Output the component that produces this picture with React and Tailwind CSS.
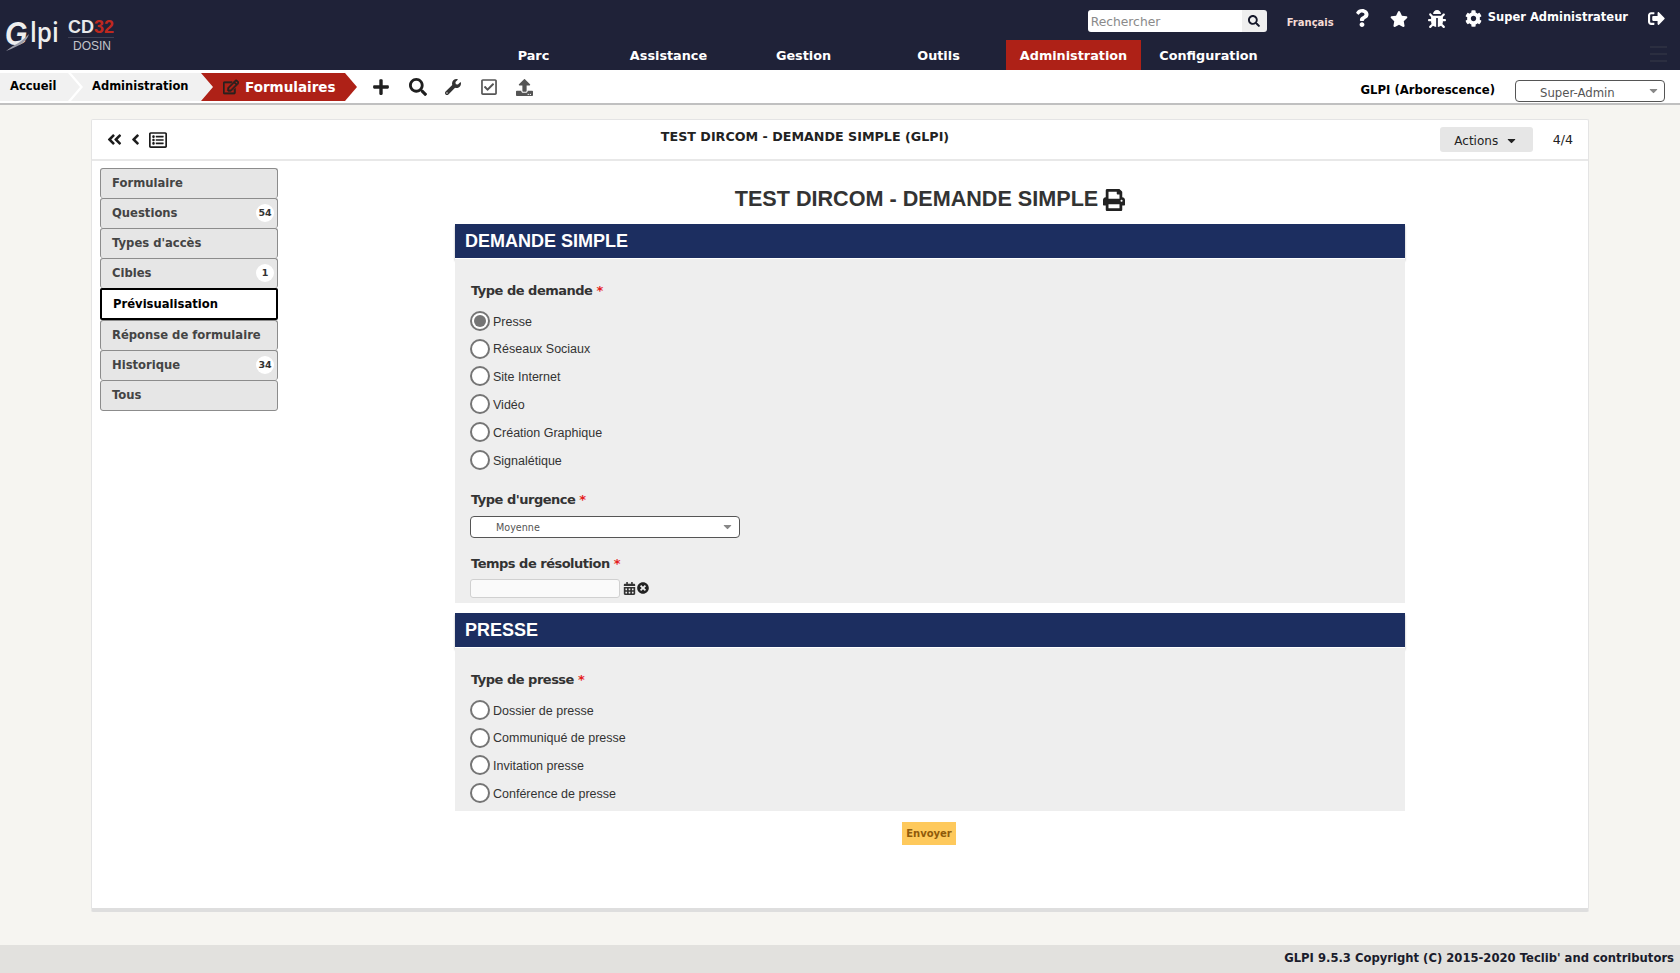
import {
  FaPlus, FaSearch, FaWrench, FaRegCheckSquare, FaUpload, FaQuestion, FaStar, FaBug, FaCog,
  FaSignOutAlt, FaPrint, FaAngleDoubleLeft, FaAngleLeft, FaRegListAlt, FaRegEdit, FaCalendarAlt,
  FaTimesCircle, FaCaretDown,
} from "react-icons/fa";

const verdana = "font-['DejaVu_Sans',sans-serif]";
const arial = "font-['Liberation_Sans',Arial,sans-serif]";

const navItems = ["Parc", "Assistance", "Gestion", "Outils", "Administration", "Configuration"];

const tabs = [
  { label: "Formulaire" },
  { label: "Questions", count: 54 },
  { label: "Types d'accès" },
  { label: "Cibles", count: 1 },
  { label: "Prévisualisation", active: true },
  { label: "Réponse de formulaire" },
  { label: "Historique", count: 34 },
  { label: "Tous" },
];

function Logo() {
  return (
    <div className="flex items-start w-[120px] h-[50px] pl-[5px] pt-[14px]">
      <div className="relative flex items-start w-[56px] h-[40px] text-[#eeeeee]">
        <span className={`w-[25px] text-[34px] leading-[38px] font-bold italic scale-x-[0.85] origin-left ${arial}`}>G</span>
        <span className="text-[27px] leading-[36px] font-semibold scale-x-[0.9] origin-left font-['Open_Sans',sans-serif]">lpi</span>
        <svg className="absolute left-0 top-[18px]" width="28" height="20" viewBox="0 0 28 20">
          <path d="M1 19 C 8 13 16 11 24 2 C 22 10 14 14 1 19 Z" fill="#9a9ca8" />
        </svg>
      </div>
      <div className={`ml-[7px] mt-[5px] flex flex-col items-center w-[46px] ${arial}`}>
        <div className="text-[18px] leading-[17px] font-bold text-[#e8e8ea] border-b border-[#3d4054] pb-[1px] w-full whitespace-nowrap">
          CD<span className="text-[#c0281e]">32</span>
        </div>
        <div className="text-[12px] leading-[14px] mt-[1px] ml-[2px] text-[#c4c5cb]">DOSIN</div>
      </div>
    </div>
  );
}

function Header() {
  return (
    <header className="relative h-[70px] bg-[#1f2238] flex shrink-0">
      <Logo />
      <nav className={`absolute left-[466px] top-[40px] flex h-[30px] ${verdana}`}>
        {navItems.map((item) => (
          <a
            key={item}
            className={`w-[135px] h-[30px] pt-[1px] flex items-center justify-center text-[12.8px] font-bold text-white ${
              item === "Administration" ? "bg-[#ae2117]" : ""
            }`}
          >
            {item}
          </a>
        ))}
      </nav>
      <div className="ml-auto flex items-start text-white pr-[15px] pt-[10px]">
        <div className="flex h-[22px] w-[179px] rounded-[3px] overflow-hidden mr-[20px]">
          <div className={`flex-1 bg-white text-[#8a8a8a] text-[12.3px] leading-[24px] pl-[3px] ${verdana}`}>Rechercher</div>
          <div className="w-[25px] bg-[#efefef] flex items-center justify-center text-[#15182a]">
            <FaSearch size={12} />
          </div>
        </div>
        <span className={`text-[10px] font-bold text-[#f6dcd6] mt-[5px] mr-[19px] ${verdana}`}>Français</span>
        <FaQuestion size={18} className="mr-[19px] mt-[-1px]" />
        <FaStar size={18} className="mr-[20px]" />
        <FaBug size={18} className="mr-[19px]" />
        <FaCog size={17} className="mr-[6px]" />
        <span className={`text-[11.5px] font-bold leading-[14px] mr-[20px] ${verdana}`}>Super Administrateur</span>
        <FaSignOutAlt size={17} />
      </div>
      <div className="absolute left-[1650px] top-[46px] w-[17px] flex flex-col gap-[5px]">
        <div className="h-[2px] bg-[#2b2e40]" />
        <div className="h-[2px] bg-[#2b2e40]" />
        <div className="h-[2px] bg-[#2b2e40]" />
      </div>
    </header>
  );
}

function Breadcrumb() {
  return (
    <div className="h-[35px] bg-white border-b-2 border-[#c0c0c0] flex items-start shrink-0">
      <div className="flex items-center h-[28px] mt-[3px]">
        <div className={`h-[28px] w-[68px] bg-[#f1f1f1] flex items-center pl-[10px] text-[11.5px] font-bold text-black ${verdana}`}>
          Accueil
        </div>
        <div className="w-0 h-0 border-y-[14px] border-y-transparent border-l-[12px] border-l-[#f1f1f1]" />
        <div className={`h-[28px] w-[130px] ml-[-9px] bg-[#f1f1f1] flex items-center pl-[21px] text-[11.5px] font-bold text-black whitespace-nowrap ${verdana} [clip-path:polygon(0_0,100%_0,100%_100%,0_100%,12px_50%)]`}>
          Administration
        </div>
        <div className="w-0 h-0 border-y-[14px] border-y-transparent border-l-[12px] border-l-[#f1f1f1]" />
        <div className={`h-[28px] w-[144px] ml-[-12px] bg-[#ae2117] flex items-center pl-[22px] gap-[6px] text-[13.5px] font-bold text-white whitespace-nowrap ${verdana} [clip-path:polygon(0_0,100%_0,100%_100%,0_100%,12px_50%)]`}>
          <FaRegEdit size={16} stroke="currentColor" strokeWidth={24} className="text-[#2a2220] shrink-0" />
          Formulaires
        </div>
        <div className="w-0 h-0 border-y-[14px] border-y-transparent border-l-[12px] border-l-[#ae2117]" />
      </div>
      <div className="flex items-center h-[28px] mt-[3px] ml-[15px] text-[#1f1f1f]">
        <FaPlus size={18} className="mr-[19px]" />
        <FaSearch size={18} className="mr-[18px]" />
        <FaWrench size={16} className="mr-[19px] text-[#333]" />
        <FaRegCheckSquare size={18} className="mr-[18px] text-[#555]" />
        <FaUpload size={17} className="text-[#555]" />
      </div>
      <div className="ml-auto flex items-start pr-[15px] pt-[10px]">
        <span className={`text-[11.7px] leading-[16px] font-bold text-black mt-[2px] mr-[20px] ${verdana}`}>GLPI (Arborescence)</span>
        <div className="relative w-[150px] h-[22px] bg-white border border-[#555] rounded-[4px]">
          <span className={`absolute left-[24px] top-[4px] text-[11.7px] leading-[16px] text-[#555] ${verdana}`}>Super-Admin</span>
          <FaCaretDown size={13} className="absolute right-[4px] top-[3px] text-[#888]" />
        </div>
      </div>
    </div>
  );
}

function SideTabs() {
  return (
    <ul className={`w-[178px] ml-[8px] mt-[7px] shrink-0 ${verdana}`}>
      {tabs.map((tab) =>
        tab.active ? (
          <li key={tab.label} className="h-[32px] bg-white border-2 border-black rounded-[2px] pl-[11px] text-[11.6px] leading-[28px] font-bold text-black">
            {tab.label}
          </li>
        ) : (
          <li
            key={tab.label}
            className="relative h-[30px] bg-[#e6e6e6] border border-[#8c8c8c] border-b-0 last:border-b last:h-[31px] rounded-[3px] pl-[11px] text-[11.6px] leading-[28px] font-bold text-[#444]"
          >
            {tab.label}
            {tab.count && (
              <span className="absolute right-[3px] top-[5px] w-[18px] h-[18px] rounded-full bg-white text-[9.5px] leading-[18px] text-center text-[#333]">
                {tab.count}
              </span>
            )}
          </li>
        )
      )}
    </ul>
  );
}

function SectionHead({ title }) {
  return (
    <div className={`h-[35px] bg-[#1c2e60] text-white text-[18px] leading-[34px] font-bold pl-[10px] shadow-[0_2px_2px_rgba(0,0,0,0.3)] border-b border-white ${arial}`}>
      {title}
    </div>
  );
}

function FieldLabel({ children, className = "" }) {
  return (
    <div className={`text-[13px] leading-[17px] font-bold text-[#333] tracking-[-0.5px] ml-[1px] ${verdana} ${className}`}>
      {children} <span className="text-[#e51c1c] font-bold">*</span>
    </div>
  );
}

function Radio({ label, checked }) {
  return (
    <div className={`h-[27.8px] flex items-center text-[12.5px] text-[#333] ${arial}`}>
      <span className="w-[20px] h-[20px] mr-[3px] rounded-full bg-white border-[2px] border-[#757575] flex items-center justify-center shrink-0">
        {checked && <span className="w-[12px] h-[12px] rounded-full bg-[#757575]" />}
      </span>
      <span className="mt-[2px]">{label}</span>
    </div>
  );
}

function PreviewForm() {
  return (
    <div className="w-[950px] ml-[177px] flex flex-col">
      <h1 className={`mt-[20px] mb-[6px] h-[37px] flex items-center justify-center gap-[5px] text-[21.6px] font-bold text-[#333] ${arial}`}>
        TEST DIRCOM - DEMANDE SIMPLE
        <FaPrint size={22} className="text-[#222]" />
      </h1>
      <SectionHead title="DEMANDE SIMPLE" />
      <div className="h-[344px] bg-[#eeeeee] pl-[15px] pt-[23px]">
        <FieldLabel>Type de demande</FieldLabel>
        <div className="mt-[8px]">
          <Radio label="Presse" checked />
          <Radio label="Réseaux Sociaux" />
          <Radio label="Site Internet" />
          <Radio label="Vidéo" />
          <Radio label="Création Graphique" />
          <Radio label="Signalétique" />
        </div>
        <FieldLabel className="mt-[17px]">Type d'urgence</FieldLabel>
        <div className="relative w-[270px] h-[22px] mt-[8px] bg-white border border-[#555] rounded-[4px]">
          <span className={`absolute left-[25px] top-[3px] text-[9.6px] leading-[16px] text-[#555] ${verdana}`}>Moyenne</span>
          <FaCaretDown size={13} className="absolute right-[5px] top-[3px] text-[#888]" />
        </div>
        <FieldLabel className="mt-[17px]">Temps de résolution</FieldLabel>
        <div className="flex items-center mt-[7px]">
          <div className="w-[150px] h-[19px] bg-[#fafafa] border border-[#d0d0d0] rounded-[3px]" />
          <FaCalendarAlt size={13} className="ml-[3px] text-[#333]" />
          <FaTimesCircle size={12} className="ml-[1px] text-[#222]" />
        </div>
      </div>
      <div className="mt-[10px]">
        <SectionHead title="PRESSE" />
        <div className="h-[163px] bg-[#eeeeee] pl-[15px] pt-[23px]">
          <FieldLabel>Type de presse</FieldLabel>
          <div className="mt-[8px]">
            <Radio label="Dossier de presse" />
            <Radio label="Communiqué de presse" />
            <Radio label="Invitation presse" />
            <Radio label="Conférence de presse" />
          </div>
        </div>
      </div>
      <button className={`self-center -ml-[2px] w-[54px] h-[23px] mt-[11px] bg-[#fec95c] text-[#8f5a0a] text-[10px] font-bold ${verdana}`}>
        Envoyer
      </button>
    </div>
  );
}

export default function App() {
  return (
    <div className="w-[1680px] h-[973px] flex flex-col bg-[#f6f5f1] overflow-hidden">
      <Header />
      <Breadcrumb />
      <main className="flex-1 pl-[91px] pt-[14px]">
        <div className="w-[1498px] h-[793px] bg-white border border-[#e4e4e4] border-b-[4px] border-b-[#dedede] rounded-[2px] flex flex-col">
          <div className="h-[41px] border-b-2 border-[#e8e8e8] flex items-center shrink-0">
            <div className="w-[90px] flex items-center pl-[14px] text-[#1c1c1c]">
              <FaAngleDoubleLeft size={17} className="mr-[4px]" />
              <FaAngleLeft size={17} className="mr-[5px]" />
              <FaRegListAlt size={18} />
            </div>
            <div className={`flex-1 self-start mt-[7px] text-center text-[12.7px] font-bold text-[#222] ${verdana}`}>
              TEST DIRCOM - DEMANDE SIMPLE (GLPI)
            </div>
            <div className="w-[160px] flex items-center justify-end">
              <div className={`w-[93px] h-[25px] bg-[#e6e6e6] rounded-[3px] flex items-center justify-center gap-[7px] pt-[2px] text-[12px] text-[#222] ${verdana}`}>
                Actions <FaCaretDown size={13} />
              </div>
              <span className={`ml-[20px] mr-[15px] mt-[1px] text-[12.6px] text-[#222] ${verdana}`}>4/4</span>
            </div>
          </div>
          <div className="flex flex-1">
            <SideTabs />
            <PreviewForm />
          </div>
        </div>
      </main>
      <footer className={`h-[28px] bg-[#e2e1de] text-right pr-[6px] text-[11.6px] leading-[27px] font-bold text-[#1a1c2c] shrink-0 ${verdana}`}>
        GLPI 9.5.3 Copyright (C) 2015-2020 Teclib' and contributors
      </footer>
    </div>
  );
}
